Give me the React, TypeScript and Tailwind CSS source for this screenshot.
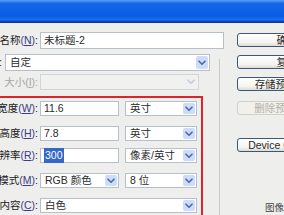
import type { ReactNode } from 'react';

const font = 'font-["Liberation_Sans","Noto_Sans_CJK_SC",sans-serif]';

function Label({ text, k, w = 'w-[40px]', disabled = false }: { text: string; k?: string; w?: string; disabled?: boolean }) {
  return (
    <div className={`${w} shrink-0 flex justify-end pr-[2px] whitespace-nowrap ${disabled ? 'text-[#a7a7a7]' : 'text-[#1c1c1c]'}`}>
      {text}
      {k && (
        <span className={disabled ? '' : 'text-[#3b3b86]'}>
          (<span className="underline">{k}</span>)
        </span>
      )}
      :
    </div>
  );
}

function Input({ w, children }: { w: string; children?: ReactNode }) {
  return (
    <div className={`${w} h-full shrink-0 flex items-center bg-white border border-[#b7bfca] pl-[3px] text-[#2a2a2a] whitespace-nowrap`}>
      {children}
    </div>
  );
}

function Chevron({ color }: { color: string }) {
  return (
    <svg width="8" height="6" viewBox="0 0 8 6" fill="none">
      <path d="M1 1.2 L4 4.2 L7 1.2" stroke={color} strokeWidth="1.6" strokeLinecap="round" strokeLinejoin="round" />
    </svg>
  );
}

function Select({ w, text, disabled = false }: { w: string; text?: string; disabled?: boolean }) {
  return (
    <div
      className={`${w} h-full shrink-0 flex items-center border ${
        disabled ? 'border-[#d3d6d9] bg-[#f1f1ef]' : 'border-[#b7bfca] bg-white'
      } whitespace-nowrap`}
    >
      <span className="flex-1 pl-[4px] text-[#2a2a2a]">{text}</span>
      <div
        className={`w-[12px] h-[calc(100%-2px)] mr-[1px] flex items-center justify-center rounded-[2px] ${
          disabled ? 'bg-[#eef0f2]' : 'bg-[#cddcf8]'
        }`}
      >
        <Chevron color={disabled ? '#c5cad2' : '#4a69ad'} />
      </div>
    </div>
  );
}

function Button({ children, mt, disabled = false }: { children: ReactNode; mt: string; disabled?: boolean }) {
  return (
    <div
      className={`${mt} w-[100px] h-[14px] shrink-0 flex items-center justify-center rounded-[3px] border whitespace-nowrap ${
        disabled
          ? 'border-[#d2d0c8] bg-[#f1f0ec] text-[#b3b0a6]'
          : 'border-[#3d5777] bg-[linear-gradient(to_bottom,#ffffff,#f4f4f0_70%,#dcdad2)] text-[#2a2a2a]'
      }`}
    >
      {children}
    </div>
  );
}

export default function App() {
  return (
    <div className={`w-[284px] h-[215px] overflow-hidden bg-[#eeeeec] flex flex-col text-[10.5px] leading-none ${font}`}>
      <div className="h-[23px] shrink-0 bg-[linear-gradient(to_bottom,#5aa2f8,#1466ea_15%,#0a5de2_70%,#1a6cf0_85%,#0b47b8_94%,#07317f)]" />

      <div className="flex flex-1 min-h-0">
        <div className="w-[237px] shrink-0 flex flex-col pt-[9px]">
          <div className="h-[17px] flex items-center">
            <Label text="名称" k="N" />
            <Input w="w-[184px]">未标题-2</Input>
          </div>

          <div className="flex flex-1 mt-[5px]">
            <div className="w-[219px] shrink-0 flex flex-col">
              <div className="h-[17px] flex items-center">
                <Label text="预设" k="P" w="w-[4px]" />
                <div className="w-[1px]" />
                <Select w="w-[205px]" text="自定" />
              </div>

              <div className="h-[16px] mt-[3px] flex items-center">
                <Label text="大小" k="I" disabled />
                <Select w="w-[159px]" disabled />
              </div>

              <div className="ml-[-4px] w-[207px] mt-[6px] flex-1 border-t-2 border-r-2 border-[#d8262d] pl-[4px] pt-[3px] flex flex-col">
                <div className="h-[15px] flex items-center">
                  <Label text="宽度" k="W" />
                  <Input w="w-[79px]">11.6</Input>
                  <div className="w-[6px]" />
                  <Select w="w-[72px]" text="英寸" />
                </div>
                <div className="h-[15px] mt-[10px] flex items-center">
                  <Label text="高度" k="H" />
                  <Input w="w-[79px]">7.8</Input>
                  <div className="w-[6px]" />
                  <Select w="w-[72px]" text="英寸" />
                </div>
                <div className="h-[15px] mt-[7px] flex items-center">
                  <Label text="分辨率" k="R" />
                  <Input w="w-[79px]">
                    <span className="bg-[#3468c8] text-white px-[1px] py-[2px]">300</span>
                  </Input>
                  <div className="w-[6px]" />
                  <Select w="w-[72px]" text="像素/英寸" />
                </div>
                <div className="h-[15px] mt-[10px] flex items-center">
                  <Label text="颜色模式" k="M" />
                  <Select w="w-[79px]" text="RGB 颜色" />
                  <div className="w-[6px]" />
                  <Select w="w-[72px]" text="8 位" />
                </div>
                <div className="h-[15px] mt-[10px] flex items-center">
                  <Label text="背景内容" k="C" />
                  <Select w="w-[157px]" text="白色" />
                </div>
              </div>
            </div>
            <div className="w-px bg-[#c9c9c6] mt-[5px]" />
          </div>
        </div>

        <div className="flex flex-col pt-[10px]">
          <Button mt="mt-0">确定</Button>
          <Button mt="mt-[8px]">复位</Button>
          <Button mt="mt-[8px]">存储预设(S)...</Button>
          <Button mt="mt-[10px]" disabled>删除预设(D)...</Button>
          <Button mt="mt-[23px]">Device Central...</Button>
          <div className="mt-[51px] pl-[28px] whitespace-nowrap text-[9.5px] text-[#444]">图像大小:</div>
        </div>
      </div>
    </div>
  );
}
